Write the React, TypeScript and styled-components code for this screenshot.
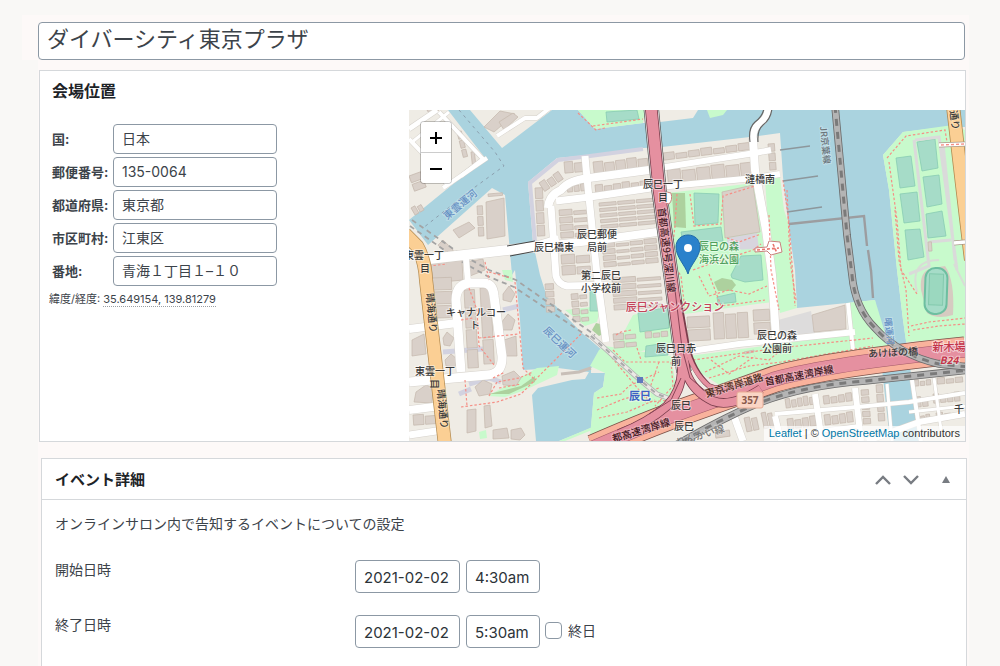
import React from "react";
import styled, { createGlobalStyle } from "styled-components";

const GlobalStyle = createGlobalStyle`
  *, *::before, *::after { box-sizing: border-box; }
  body {
    margin: 0;
    background: #f9f8f6;
    color: #3c434a;
    font-family: Inter, "Noto Sans CJK JP", sans-serif;
    font-size: 14px;
    line-height: 20px;
  }
`;

const Page = styled.main`
  display: flex;
  flex-direction: column;
  min-height: 100vh;
  padding: 15px 31px 0 22px;
`;

const TitleBar = styled.div`
  padding: 7px 4px 0 16px;
  background: #fdf9f8;
`;

const TextField = styled.input`
  display: block;
  width: 100%;
  height: 30px;
  padding: 0 8px 2px;
  border: 1px solid #8c98a4;
  border-radius: 4px;
  background: #fff;
  color: #3c434a;
  font-family: inherit;
  font-size: 14px;
`;

const TitleField = styled(TextField)`
  height: 38px;
  padding: 0 8px 8px;
  font-size: 22px;
`;

const Panels = styled.div`
  display: flex;
  flex: 1;
  flex-direction: column;
  gap: 16px;
  margin-left: 16px;
  padding: 10px 2px 0 1px;
  background: #fdf9f8;
`;

const Card = styled.section`
  border: 1px solid #d5d8db;
  background: #fff;
`;

const VenueCard = styled(Card)`
  margin-right: 1px;
`;

const VenueTitle = styled.h2`
  margin: 0;
  padding: 8px 12px 7px;
  color: #1d2327;
  font-size: 16px;
  line-height: 24px;
`;

const VenueBody = styled.div`
  display: flex;
`;

const VenueForm = styled.form`
  display: flex;
  flex: 0 0 369px;
  flex-direction: column;
  gap: 3px;
  padding: 14px 132px 0 12px;
`;

const VenueRow = styled.div`
  display: grid;
  grid-template-columns: 61px 1fr;
  align-items: center;
`;

const VenueLabel = styled.label`
  font-size: 13px;
  font-weight: 700;
  white-space: nowrap;
`;

const Coordinates = styled.p`
  margin: 0 0 0 -3px;
  font-size: 11px;
  white-space: nowrap;
`;

const CoordinateValue = styled.abbr`
  border-bottom: 1px dotted #9a9fa4;
  text-decoration: none;
`;

const MapFrame = styled.div`
  position: relative;
  flex: 1;
  height: 331px;
  overflow: hidden;
  background: #efece5;
`;

const MapCanvas = styled.svg`
  display: block;
  width: 100%;
  height: 100%;
  font-family: "Noto Sans CJK JP", sans-serif;
`;

const ZoomControl = styled.div`
  position: absolute;
  top: 12px;
  left: 12px;
  display: flex;
  flex-direction: column;
  border-radius: 3px;
  box-shadow: 0 0 0 1px rgba(0, 0, 0, 0.22);
  overflow: hidden;
`;

const ZoomButton = styled.button`
  display: grid;
  place-items: center;
  width: 30px;
  height: 30px;
  padding: 0;
  border: 0;
  background: #fff;
  color: #000;

  &:first-child {
    height: 31px;
    border-bottom: 1px solid #ccc;
  }
`;

const Attribution = styled.div`
  position: absolute;
  right: 0;
  bottom: 0;
  padding: 0 5px;
  background: rgba(255, 255, 255, 0.7);
  color: #333;
  font-family: "Liberation Sans", sans-serif;
  font-size: 11px;
  line-height: 15px;
`;

const AttributionLink = styled.a`
  color: #0078a8;
  text-decoration: none;
`;

const CardHeader = styled.header`
  display: flex;
  align-items: center;
  justify-content: space-between;
  height: 41px;
  padding: 2px 10px 0 13px;
  border-bottom: 1px solid #d5d8db;
`;

const CardTitle = styled.h2`
  margin: 0;
  color: #1d2327;
  font-size: 15px;
`;

const HeaderActions = styled.div`
  display: flex;
  align-items: center;
  gap: 8px;
`;

const IconButton = styled.button<{ $spaced?: boolean }>`
  display: grid;
  place-items: center;
  width: 20px;
  height: 24px;
  margin-left: ${({ $spaced }) => ($spaced ? "7px" : "0")};
  padding: 0;
  border: 0;
  background: none;
  color: #787c82;
`;

const EventCard = styled(Card)`
  flex: 1;
  margin-left: 2px;
  border-bottom: 0;
`;

const EventForm = styled.form`
  display: flex;
  flex-direction: column;
  gap: 22px;
  padding: 14px 13px 0;
`;

const Description = styled.p`
  margin: 0 0 4px;
`;

const EventRow = styled.div`
  display: grid;
  grid-template-columns: 300px 1fr;
`;

const EventLabel = styled.label`
  font-size: 14px;
`;

const EventFields = styled.div`
  display: flex;
  align-items: center;
  gap: 6px;
`;

const DateField = styled(TextField)<{ $width: number }>`
  width: ${({ $width }) => $width}px;
  height: 33px;
  padding: 1px 7px 0 8px;
  color: #2c3338;
  font-size: 15px;
`;

const AllDay = styled.label`
  display: flex;
  align-items: center;
  gap: 6px;
  margin-left: -1px;
  padding-bottom: 2px;
`;

const Tick = styled.input`
  appearance: none;
  width: 17px;
  height: 17px;
  margin: 0;
  border: 1px solid #8c98a4;
  border-radius: 4px;
  background: #fff;
`;

const C = {
  water: "#aad3df",
  park: "#c8facc",
  pitch: "#a6dcc8",
  wood: "#add19e",
  building: "#d9d0c9",
  buildingEdge: "#c4b7ac",
  motorway: "#e590a0",
  trunk: "#f9b29c",
  primary: "#fbcf94",
};

type Poly = string;

const parks: Poly[] = [
  "169,0 186,19 234,13 236,0",
  "298,0 301,8 314,5 318,0",
  "258,83 346,73 355,140 363,192 276,204 264,150",
  "356,68 371,67 375,100 379,112 388,198 371,203 362,165",
  "474,45 494,22 544,15 556,20 556,228 497,232 494,210 488,160 480,80",
  "280,246 446,224 478,222 480,238 400,248 312,276 290,262",
  "438,193 466,190 477,226 446,228",
  "196,236 262,246 268,282 248,298 181,326 185,283 194,277 196,263 181,256 190,240",
  "156,200 192,196 188,212 176,216",
  "79,286 128,258 150,256 148,265 116,280 96,287",
  "93,160 103,160 104,172 96,170",
  "181,318 216,306 188,318 156,331 150,331",
  "70,322 77,320 78,328 71,329",
  "224,205 262,196 266,232 200,250",
];

const pitches: Poly[] = [
  "197,2 228,0 230,9 198,12",
  "285,83 310,84 309,113 286,115",
  "272,122 312,117 314,131 294,132 284,127 274,132",
  "322,165 332,146 352,145 354,170 336,172 323,168",
  "229,203 259,197 260,218 231,222",
  "237,236 257,233 259,245 236,247",
  "308,187 326,183 327,192 309,194",
  "181,181 190,180 191,201 181,201",
  "508,32 526,29 529,58 513,61",
  "487,48 502,46 506,76 491,78",
  "514,67 530,65 533,94 518,97",
  "491,84 508,82 511,111 495,113",
  "517,104 533,101 537,126 519,128",
  "496,120 511,119 515,147 499,150",
];

const woods: Poly[] = [
  "263,83 276,83 277,118 265,117",
  "305,172 313,168 323,170 327,175 322,181 309,181",
  "187,213 195,215 198,222 190,226 183,220",
  "80,284 112,276 126,266 126,272 100,284",
];

const landmarks: Poly[] = [
  "313,82 344,75 351,122 316,128",
  "77,92 95,88 96,126 78,129",
  "75,17 91,1 106,4 85,22",
  "90,12 104,3 109,7 95,20",
  "44,120 60,112 66,118 50,128",
  "22,154 53,150 54,170 24,173",
  "57,152 74,149 76,160 61,166",
  "3,230 15,224 17,244 3,246",
  "7,282 17,275 24,278 23,293 5,292",
  "403,205 436,195 437,219 405,222",
  "335,242 345,240 345,242 336,244",
  "58,300 67,299 67,321 58,323",
  "75,296 81,295 83,316 76,318",
  "66,277 74,270 83,274 81,284 70,286",
  "93,266 105,261 112,268 107,276 94,275",
  "92,213 99,204 106,210 103,220 94,220",
  "95,230 107,226 108,246 96,246",
  "94,184 100,176 106,184 102,192 94,190",
  "34,228 38,222 45,228 41,236 35,235",
  "36,250 42,244 48,249 46,257 37,256",
  "84,320 98,318 100,328 84,329",
  "102,320 112,318 116,325 111,330 102,329",
];

type Block = { x: number; y: number; w: number; h: number; cols: number; rows: number; turn: number };

const blocks: Block[] = [
  { x: 184, y: 52, w: 56, h: 15, cols: 5, rows: 1, turn: -6 },
  { x: 254, y: 43, w: 88, h: 9, cols: 7, rows: 1, turn: -7 },
  { x: 258, y: 60, w: 88, h: 16, cols: 6, rows: 1, turn: -6 },
  { x: 186, y: 75, w: 54, h: 11, cols: 6, rows: 1, turn: -6 },
  { x: 359, y: 34, w: 8, h: 28, cols: 1, rows: 3, turn: -4 },
  { x: 190, y: 93, w: 56, h: 28, cols: 3, rows: 5, turn: -5 },
  { x: 193, y: 133, w: 56, h: 26, cols: 4, rows: 4, turn: -5 },
  { x: 150, y: 100, w: 29, h: 30, cols: 2, rows: 4, turn: -4 },
  { x: 152, y: 145, w: 30, h: 22, cols: 2, rows: 2, turn: -4 },
  { x: 126, y: 78, w: 9, h: 50, cols: 1, rows: 4, turn: -3 },
  { x: 130, y: 73, w: 24, h: 12, cols: 3, rows: 1, turn: -34 },
  { x: 155, y: 52, w: 20, h: 13, cols: 2, rows: 1, turn: -5 },
  { x: 158, y: 74, w: 20, h: 10, cols: 3, rows: 1, turn: -5 },
  { x: 136, y: 174, w: 10, h: 30, cols: 1, rows: 4, turn: -3 },
  { x: 162, y: 184, w: 17, h: 30, cols: 2, rows: 4, turn: -5 },
  { x: 203, y: 168, w: 50, h: 34, cols: 2, rows: 5, turn: -4 },
  { x: 204, y: 224, w: 24, h: 16, cols: 2, rows: 2, turn: -5 },
  { x: 236, y: 222, w: 24, h: 8, cols: 3, rows: 1, turn: -5 },
  { x: 278, y: 207, w: 24, h: 26, cols: 1, rows: 2, turn: -3 },
  { x: 304, y: 203, w: 36, h: 28, cols: 3, rows: 1, turn: -3 },
  { x: 344, y: 200, w: 18, h: 26, cols: 1, rows: 2, turn: -3 },
  { x: 55, y: 180, w: 12, h: 80, cols: 1, rows: 4, turn: -3 },
  { x: 71, y: 178, w: 12, h: 78, cols: 1, rows: 3, turn: -3 },
  { x: 22, y: 168, w: 22, h: 42, cols: 1, rows: 3, turn: -2 },
  { x: 68, y: 96, w: 7, h: 32, cols: 1, rows: 3, turn: -3 },
  { x: 79, y: 84, w: 16, h: 5, cols: 1, rows: 1, turn: -5 },
  { x: 34, y: 130, w: 16, h: 9, cols: 1, rows: 1, turn: 44 },
  { x: 0, y: 66, w: 14, h: 18, cols: 1, rows: 2, turn: -20 },
  { x: 2, y: 98, w: 12, h: 10, cols: 2, rows: 1, turn: -30 },
  { x: 48, y: 22, w: 6, h: 28, cols: 1, rows: 3, turn: -14 },
  { x: 62, y: 42, w: 5, h: 14, cols: 1, rows: 1, turn: -6 },
  { x: 18, y: 0, w: 18, h: 8, cols: 2, rows: 1, turn: -32 },
  { x: 4, y: 305, w: 24, h: 12, cols: 2, rows: 1, turn: -4 },
  { x: 376, y: 289, w: 30, h: 11, cols: 5, rows: 1, turn: -8 },
  { x: 414, y: 286, w: 30, h: 10, cols: 4, rows: 1, turn: -7 },
  { x: 452, y: 280, w: 9, h: 36, cols: 1, rows: 5, turn: -4 },
  { x: 467, y: 275, w: 8, h: 38, cols: 1, rows: 4, turn: -4 },
  { x: 378, y: 309, w: 30, h: 12, cols: 4, rows: 1, turn: -7 },
  { x: 415, y: 305, w: 30, h: 12, cols: 4, rows: 1, turn: -7 },
  { x: 335, y: 308, w: 14, h: 16, cols: 2, rows: 1, turn: -12 },
  { x: 352, y: 303, w: 12, h: 18, cols: 2, rows: 1, turn: -12 },
  { x: 306, y: 322, w: 16, h: 8, cols: 1, rows: 1, turn: -8 },
  { x: 505, y: 270, w: 18, h: 8, cols: 3, rows: 1, turn: -5 },
  { x: 506, y: 287, w: 14, h: 12, cols: 2, rows: 1, turn: -5 },
  { x: 528, y: 268, w: 27, h: 8, cols: 3, rows: 1, turn: -5 },
  { x: 524, y: 284, w: 28, h: 11, cols: 4, rows: 1, turn: -5 },
  { x: 506, y: 305, w: 16, h: 10, cols: 3, rows: 1, turn: -8 },
  { x: 527, y: 303, w: 16, h: 10, cols: 2, rows: 1, turn: -8 },
  { x: 519, y: 132, w: 5, h: 11, cols: 1, rows: 1, turn: -4 },
];

type Street = [string, number];

const streets: Street[] = [
  ["M0 19 L28 0", 5],
  ["M30 2 L74 49 L52 66", 4],
  ["M0 29 L20 50 L38 74", 4],
  ["M2 33 L40 2", 3],
  ["M34 78 L78 48", 4],
  ["M88 26 L116 8 L128 8 L142 -3", 4],
  ["M20 149 L126 137 L150 130", 10],
  ["M126 137 L190 130 L248 122", 8],
  ["M142 96 L147 166 Q149 174 158 176 L200 175", 7],
  ["M139 98 Q140 85 152 80 Q160 70 180 68 L240 60", 8],
  ["M147 91 L181 87 L242 78", 7],
  ["M176 46 L178 68 L188 165 L197 232", 7],
  ["M250 58 L346 43 L362 40", 6],
  ["M250 77 L346 68 L371 64", 6],
  ["M344 28 L346 60 L357 120 L363 165 L367 228", 8],
  ["M359 -2 Q359 8 350 14 Q342 20 345 34", 7],
  ["M275 242 L330 234 L446 222", 6],
  ["M439 193 L444 240", 4],
  ["M0 219 L48 213", 8],
  ["M52 262 L47 190 Q47 174 62 173 L74 173 Q84 173 85 186 L93 246 Q94 264 78 265 L0 272", 9],
  ["M57 148 L59 172", 6],
  ["M0 300 L32 296", 8],
  ["M0 325 L34 320", 7],
  ["M366 306 L372 331", 6],
  ["M406 284 L413 331", 6],
  ["M446 278 L452 331", 6],
  ["M478 274 L483 331", 3],
  ["M366 304 L448 297 L500 292 L556 283", 4],
  ["M372 326 L450 316", 4],
  ["M325 306 L334 331", 7],
  ["M503 270 L512 331", 4],
  ["M525 268 L532 320", 3],
  ["M500 302 L556 296", 3],
  ["M458 331 L510 312 L556 304", 6],
];

const footways: string[] = [
  "M184 16 L234 9",
  "M169 3 L187 20 L196 18",
  "M268 84 L266 116 L262 150 L272 166 L276 200",
  "M281 84 L285 116 L312 114 L314 86 L346 76",
  "M318 128 L330 132 L352 124",
  "M284 160 L306 152 L320 148 L344 140 L352 134",
  "M290 166 L300 186 L320 180 L340 184 L358 176",
  "M300 164 L312 196 L356 190",
  "M360 105 L362 160 L370 200",
  "M374 70 L380 112 L386 196",
  "M378 80 L381 150 L387 190",
  "M478 48 L497 26 L536 20 L538 32",
  "M480 52 L488 110 L492 160 L508 184",
  "M486 100 L490 150 L497 180 L500 226",
  "M502 216 L520 212 L556 208",
  "M504 220 L530 216 L556 214",
  "M284 250 L370 238 L464 228",
  "M296 262 L330 246 L360 250 L372 240",
  "M300 268 L340 256 L372 252 L464 236",
  "M302 250 L320 264 L346 246",
  "M200 244 L240 292 L262 290",
  "M204 240 L216 252 L262 252 L264 276 L246 296",
  "M188 288 L212 284 L220 276 L250 262",
  "M188 300 L212 290 L250 278",
  "M190 308 L218 302 L246 290",
  "M250 252 L236 292",
  "M106 172 L114 258 L126 270",
  "M52 297 L88 292 L112 284 L130 266 L173 223",
  "M60 178 L68 200 L70 236 L86 256",
  "M80 286 L88 272 L110 268 L124 262",
  "M20 156 L38 154 M76 152 L80 170",
  "M52 210 L64 208 M70 228 L110 224",
  "M84 268 L96 262 M90 278 L112 274",
  "M207 225 L212 222 L222 220 M228 238 L232 250",
  "M56 270 L58 296",
  "M80 162 L102 168",
];

const bayshore = "M184 338 Q230 318 262 306 Q330 282 366 269 Q420 254 556 240";
const expressway = "M242 -4 L250 80 L262 165 L270 228 L275 262";
const bayRail = "M262 338 Q310 310 345 295 Q390 276 456 271 L560 260";
const keiyoLine = "M426 -4 L438 125 L443 165 Q446 198 466 218 Q490 245 530 254 L560 257";
const subwayTunnels = [
  "M3 110 L50 143 L80 160 L107 170 L186 225",
  "M1 116 L48 149 L78 166 L105 177 L180 227",
];
const subwaySurface = "M182 226 L231 270 L248 284 L264 290";

const BlockShapes = ({ block }: { block: Block }) => {
  const cw = block.w / block.cols;
  const ch = block.h / block.rows;
  const cells = [];
  for (let r = 0; r < block.rows; r += 1) {
    for (let c = 0; c < block.cols; c += 1) {
      const trim = (r * 3 + c * 5) % 3;
      cells.push(
        <rect
          key={`${r}-${c}`}
          x={block.x + c * cw}
          y={block.y + r * ch + (ch > 6 ? trim : 0)}
          width={cw - 1.6}
          height={ch - (ch > 6 ? trim + 1.8 : 2.4)}
        />,
      );
    }
  }
  return <g transform={`rotate(${block.turn} ${block.x} ${block.y})`}>{cells}</g>;
};

type PlaceLabel = {
  text: string;
  x: number;
  y: number;
  size?: number;
  turn?: number;
  color?: string;
  bold?: boolean;
  italic?: boolean;
};

const canalBlue = "#6690c4";
const labels: PlaceLabel[] = [
  { text: "東雲運河", x: 51, y: 94, turn: -40, color: canalBlue },
  { text: "辰巳運河", x: 151, y: 232, turn: 44, color: canalBlue },
  { text: "曙運河", x: 481, y: 221, turn: 84, color: canalBlue, size: 9 },
  { text: "辰巳橋東", x: 145, y: 137 },
  { text: "辰巳郵便", x: 188, y: 124 },
  { text: "局前", x: 188, y: 137 },
  { text: "辰巳一丁", x: 254, y: 74 },
  { text: "目", x: 254, y: 87 },
  { text: "漣橋南", x: 351, y: 69 },
  { text: "辰巳の森", x: 310, y: 136, color: "#4f9f5c" },
  { text: "海浜公園", x: 310, y: 149, color: "#4f9f5c" },
  { text: "第二辰巳", x: 192, y: 165 },
  { text: "小学校前", x: 192, y: 178 },
  { text: "辰巳ジャンクション", x: 266, y: 197, size: 11, color: "#c4435a" },
  { text: "キャナルコー", x: 67, y: 202 },
  { text: "ト", x: 66, y: 215 },
  { text: "東雲一丁", x: 15, y: 145 },
  { text: "目", x: 16, y: 158 },
  { text: "東雲一丁", x: 26, y: 261 },
  { text: "目", x: 26, y: 274, turn: 90 },
  { text: "晴海通り", x: 23, y: 203, turn: 84 },
  { text: "晴海通り", x: 34, y: 299, turn: 84 },
  { text: "首都高速9号深川線", x: 258, y: 140, turn: 83, color: "#4a1f2a" },
  { text: "JR京葉線", x: 417, y: 35, turn: 84, color: "#6b747a", size: 9 },
  { text: "通り", x: 546, y: 10, turn: 82 },
  { text: "辰巳日赤", x: 267, y: 238 },
  { text: "前", x: 267, y: 251 },
  { text: "辰巳", x: 231, y: 286, size: 11, color: "#3d5fc4", bold: true },
  { text: "辰巳", x: 272, y: 295 },
  { text: "辰巳", x: 275, y: 316 },
  { text: "東京湾岸道路", x: 325, y: 275, turn: -17, color: "#4a2b20" },
  { text: "首都高速湾岸線", x: 390, y: 265, turn: -11, color: "#3d1620" },
  { text: "都高速湾岸線", x: 232, y: 320, turn: -17, color: "#3d1620" },
  { text: "りんかい線", x: 291, y: 325, turn: -17, color: "#777" },
  { text: "辰巳の森", x: 368, y: 225 },
  { text: "公園前", x: 368, y: 238 },
  { text: "あけぼの橋", x: 484, y: 242, turn: -3 },
  { text: "新木場", x: 540, y: 237, size: 11, color: "#c4354a" },
  { text: "B24", x: 540, y: 250, size: 10, color: "#c4354a", bold: true, italic: true },
  { text: "千", x: 550, y: 299 },
];

const VenueMap = () => (
  <MapCanvas viewBox="0 0 556 331" preserveAspectRatio="xMinYMin slice" role="img" aria-label="会場周辺の地図">
    <rect width="556" height="331" fill="#efece5" />
    <path
      fill={C.water}
      d="M169 0 L186 19 L234 13 L251 12 L284 8 L289 0 H556 V17 L536 17 L494 22 L474 45 L480 80 L488 160 L494 210 L512 331 H481 L469 223 L466 190 L438 193 L388 198 L386 160 L379 112 L374 67 L371 23 L341 27 L253 37 L234 38 L181 45 L148 48 L119 72 L124 133 L131 165 L138 187 L173 223 L193 240 L190 253 L182 258 V263 L196 263 L194 277 L185 283 L182 318 L150 331 H127 L123 285 L129 278 L163 270 L176 269 L180 262 L149 258 L114 260 L111 210 L106 160 L103 165 L96 85 L83 78 L19 135 L0 110 L76 48 L39 0 H61 L93 38 L143 0 Z"
    />
    {parks.map((p) => <polygon key={p} points={p} fill={C.park} />)}
    {woods.map((p) => <polygon key={p} points={p} fill={C.wood} />)}
    <path d="M234 39 L181 46 L149 50 L121 73 L126 132" fill="none" stroke="#d2d2e0" strokeWidth="4" />
    <path d="M94 200 L110 196 M34 242 L74 239 M60 274 L80 268 L92 272 M50 284 L62 279" stroke="#d2d2e0" strokeWidth="5" fill="none" />
    {pitches.map((p) => <polygon key={p} points={p} fill={C.pitch} stroke="#88cbb2" strokeWidth="0.8" />)}
    <polygon points="318,128 348,123 350,139 318,140" fill="#d8d5de" />
    <path d="M369 210 L402 201 L406 224 L370 226 Z" fill="#dddcdc" />
    <path d="M512 180 Q510 160 524 158 L536 156 Q546 170 544 205 Q528 210 518 203 Z" fill="#d6cbc1" />
    <rect x="516" y="158" width="22" height="46" rx="10" fill={C.pitch} stroke="#6dbfa0" strokeWidth="2" transform="rotate(2 527 181)" />
    <rect x="520" y="164" width="14" height="31" fill="#9bd8bf" stroke="#83c9ad" transform="rotate(2 527 181)" />
    <path d="M506 30 L530 27 L548 160 M505 30 L520 156 L500 164 M520 132 L542 130 M534 34 L546 150" fill="none" stroke="#dadada" strokeWidth="3" />
    <path d="M508 182 Q500 150 530 150 M545 154 L556 176" fill="none" stroke="#d8ddd6" strokeWidth="2" />

    <g fill={C.building} stroke={C.buildingEdge} strokeWidth="0.7">
      {landmarks.map((p) => <polygon key={p} points={p} />)}
      {blocks.map((b) => <BlockShapes key={`${b.x}-${b.y}`} block={b} />)}
    </g>

    <g fill="none" stroke="#a3a3a3" strokeWidth="1.8" strokeDasharray="5 4">
      {subwayTunnels.map((d) => <path key={d} d={d} />)}
    </g>

    <g fill="none" stroke="#d6d2cc" strokeLinejoin="round">
      {streets.map(([d, w]) => <path key={d} d={d} strokeWidth={w + 1} />)}
    </g>
    <g fill="none" stroke="#fff" strokeLinejoin="round">
      {streets.map(([d, w]) => <path key={d} d={d} strokeWidth={w} />)}
    </g>
    <path d="M363 -2 Q362 9 354 15 Q348 20 349 32 M355 -2 Q354 6 346 12 Q339 18 341 32" fill="none" stroke="#666" strokeWidth="1.2" />
    <path d="M98 136 L126 131 M101 146 L127 141" stroke="#444" />

    <g fill="none" stroke="#f58f86" strokeWidth="1.2" strokeDasharray="2.5 2">
      {footways.map((d) => <path key={d} d={d} />)}
    </g>
    <path d="M50 0 L62 14 L86 42 L95 56 L84 64 L62 80 L14 118" fill="none" stroke="#8b9fae" strokeDasharray="3 4" />

    <path d="M371 40 L401 36 M374 71 L409 66 M378 102 L413 97" stroke="#8d979c" strokeWidth="1.6" />
    <path d="M380 114 L455 106 L458 136 M459 140 L462 161 M462 160 L464 188" fill="none" stroke="#9c9da0" strokeWidth="2.4" />
    <path d="M152 264 L170 262 L182 258" fill="none" stroke="#c8bfb8" strokeWidth="3" />

    <path d="M-4 124 L8 136 Q16 150 17 170 L36 335" fill="none" stroke="#b28a50" strokeWidth="14" />
    <path d="M-4 124 L8 136 Q16 150 17 170 L36 335" fill="none" stroke={C.primary} strokeWidth="12.6" />
    <path d="M544 -4 L553 74 L562 150" fill="none" stroke="#b28a50" strokeWidth="14" />
    <path d="M544 -4 L553 74 L562 150" fill="none" stroke={C.primary} strokeWidth="12.4" />
    <path d="M530 35 L556 34 M545 133 L556 132" stroke="#a98" strokeWidth="5" />
    <path d="M530 35 L556 34 M545 133 L556 132" stroke="#fff" strokeWidth="3.6" />
    <path d="M532 35 L556 34" stroke="#f58f86" strokeWidth="1.4" strokeDasharray="3 2" />

    <path d={subwaySurface} fill="none" stroke="#b3b3b3" strokeWidth="5" />
    <path d={subwaySurface} fill="none" stroke="#ece9e6" strokeWidth="3.4" />
    <path d={subwaySurface} fill="none" stroke="#a9a9a9" strokeWidth="2" strokeDasharray="5 5" />

    <path d={bayshore} fill="none" stroke="#7c5148" strokeWidth="27" />
    <path d={bayshore} fill="none" stroke={C.trunk} strokeWidth="25.4" />
    <path d={bayshore} fill="none" stroke="#a35a68" strokeWidth="15" />
    <path d={bayshore} fill="none" stroke={C.motorway} strokeWidth="14" />
    <path d={expressway} fill="none" stroke="#555" strokeWidth="15.4" />
    <path d={expressway} fill="none" stroke="#eee" strokeWidth="14" />
    <path d={expressway} fill="none" stroke="#7a3d4c" strokeWidth="12.6" />
    <g fill="none">
      <path d="M272 225 L273 260 Q272 282 258 296 Q240 312 210 324 M273 225 L277 262 Q284 282 304 291 Q322 298 352 279" stroke="#7a3d4c" strokeWidth="9.6" />
      <path d="M268 215 L273 260 Q272 282 258 296 Q240 312 210 324 M269 215 L277 262 Q284 282 304 291 Q322 298 352 279" stroke={C.motorway} strokeWidth="8" />
      <path d="M270 190 L278 236 Q284 262 300 276 Q308 280 318 278" stroke="#7a3d4c" strokeWidth="5.6" />
      <path d="M268 186 L277 236 Q283 262 300 276 Q308 280 320 277" stroke={C.motorway} strokeWidth="4.2" />
    </g>
    <path d={expressway} fill="none" stroke={C.motorway} strokeWidth="11" />
    <path d="M266 180 L273 238 L281 268 L300 284 M272 268 L262 290 L240 304" fill="none" stroke="#8a4658" strokeWidth="1" />
    <path d="M333 278 Q336 272 345 270 L355 268" fill="none" stroke="#a99" strokeWidth="1.4" />

    {[bayRail, keiyoLine].map((d) => (
      <g key={d} fill="none">
        <path d={d} stroke="#6a6a6a" strokeWidth="7.6" />
        <path d={d} stroke="#b4b4b4" strokeWidth="6" />
        <path d={d} stroke="#7a7a7a" strokeWidth="3" strokeDasharray="7 6" />
      </g>
    ))}

    <path d="M346 138 L358 137 L360 131 L371 132 L373 142 L362 145 L358 141 L346 142 Z" fill="#fff" stroke="#c9837e" />
    <path d="M348 140 L370 138 M364 134 L368 143" stroke="#e8746c" strokeWidth="1.6" strokeDasharray="3 2" />
    <path d="M258 82 L262 83 Q264 90 260 94 L257 93" fill="#fff" stroke="#c9837e" />
    <rect x="228" y="267" width="6" height="6" fill="#5f79bd" />

    <rect x="328" y="282" width="26" height="16" rx="2" fill="#fad5c5" stroke="#e8ab94" />
    <text x="341" y="294" textAnchor="middle" fontFamily="Noto Sans" fontSize="10" fontWeight="700" fill="#8a5a4c">357</text>

    {labels.map((l) => (
      <text
        key={`${l.text}-${l.x}-${l.y}`}
        x={l.x}
        y={l.y}
        dy="4"
        textAnchor="middle"
        fontSize={l.size ?? 10}
        fontWeight={l.bold ? 700 : 500}
        fontStyle={l.italic ? "italic" : "normal"}
        fill={l.color ?? "#3a3a3a"}
        stroke="#fff"
        strokeOpacity={l.turn ? 0.25 : 0.5}
        strokeWidth="2"
        paintOrder="stroke"
        transform={l.turn ? `rotate(${l.turn} ${l.x} ${l.y})` : undefined}
      >
        {l.text}
      </text>
    ))}

    <path
      d="M279 164 C276 155 267 147 267 137 C267 130 272 125 279 125 C286 125 291 130 291 137 C291 147 281 155 279 164 Z"
      fill="#2a81cb"
      stroke="#1f6aa8"
    />
    <circle cx="279" cy="138" r="4" fill="#fff" />
  </MapCanvas>
);

const venueFields = [
  { id: "country", label: "国:", value: "日本" },
  { id: "postcode", label: "郵便番号:", value: "135-0064" },
  { id: "prefecture", label: "都道府県:", value: "東京都" },
  { id: "city", label: "市区町村:", value: "江東区" },
  { id: "street", label: "番地:", value: "青海１丁目１–１０" },
];

const App = () => (
  <>
    <GlobalStyle />
    <Page>
      <TitleBar>
        <TitleField aria-label="会場名" defaultValue="ダイバーシティ東京プラザ" />
      </TitleBar>
      <Panels>
        <VenueCard>
          <VenueTitle>会場位置</VenueTitle>
          <VenueBody>
            <VenueForm>
              {venueFields.map((f) => (
                <VenueRow key={f.id}>
                  <VenueLabel htmlFor={f.id}>{f.label}</VenueLabel>
                  <TextField id={f.id} defaultValue={f.value} />
                </VenueRow>
              ))}
              <Coordinates>
                緯度/経度: <CoordinateValue>35.649154, 139.81279</CoordinateValue>
              </Coordinates>
            </VenueForm>
            <MapFrame>
              <VenueMap />
              <ZoomControl>
                <ZoomButton type="button" aria-label="ズームイン">
                  <svg width="14" height="14" viewBox="0 0 14 14">
                    <path d="M7 2 V14 M1 8 H13" stroke="currentColor" strokeWidth="2" />
                  </svg>
                </ZoomButton>
                <ZoomButton type="button" aria-label="ズームアウト">
                  <svg width="14" height="14" viewBox="0 0 14 14">
                    <path d="M1 8 H13" stroke="currentColor" strokeWidth="2" />
                  </svg>
                </ZoomButton>
              </ZoomControl>
              <Attribution>
                <AttributionLink href="#leaflet">Leaflet</AttributionLink> | ©{" "}
                <AttributionLink href="#osm">OpenStreetMap</AttributionLink> contributors
              </Attribution>
            </MapFrame>
          </VenueBody>
        </VenueCard>

        <EventCard>
          <CardHeader>
            <CardTitle>イベント詳細</CardTitle>
            <HeaderActions>
              <IconButton type="button" aria-label="上に移動">
                <svg width="16" height="10" viewBox="0 0 16 10">
                  <path d="M1 9 L8 2 L15 9" fill="none" stroke="currentColor" strokeWidth="2.4" />
                </svg>
              </IconButton>
              <IconButton type="button" aria-label="下に移動">
                <svg width="16" height="10" viewBox="0 0 16 10">
                  <path d="M1 1 L8 8 L15 1" fill="none" stroke="currentColor" strokeWidth="2.4" />
                </svg>
              </IconButton>
              <IconButton type="button" aria-label="パネルを閉じる" $spaced>
                <svg width="10" height="8" viewBox="0 0 10 8">
                  <path d="M5 0 L9 7 H1 Z" fill="currentColor" />
                </svg>
              </IconButton>
            </HeaderActions>
          </CardHeader>
          <EventForm>
            <Description>オンラインサロン内で告知するイベントについての設定</Description>
            <EventRow>
              <EventLabel htmlFor="start-date">開始日時</EventLabel>
              <EventFields>
                <DateField id="start-date" $width={105} defaultValue="2021-02-02" />
                <DateField aria-label="開始時刻" $width={74} defaultValue="4:30am" />
              </EventFields>
            </EventRow>
            <EventRow>
              <EventLabel htmlFor="end-date">終了日時</EventLabel>
              <EventFields>
                <DateField id="end-date" $width={105} defaultValue="2021-02-02" />
                <DateField aria-label="終了時刻" $width={74} defaultValue="5:30am" />
                <AllDay>
                  <Tick type="checkbox" />
                  終日
                </AllDay>
              </EventFields>
            </EventRow>
          </EventForm>
        </EventCard>
      </Panels>
    </Page>
  </>
);

export default App;
